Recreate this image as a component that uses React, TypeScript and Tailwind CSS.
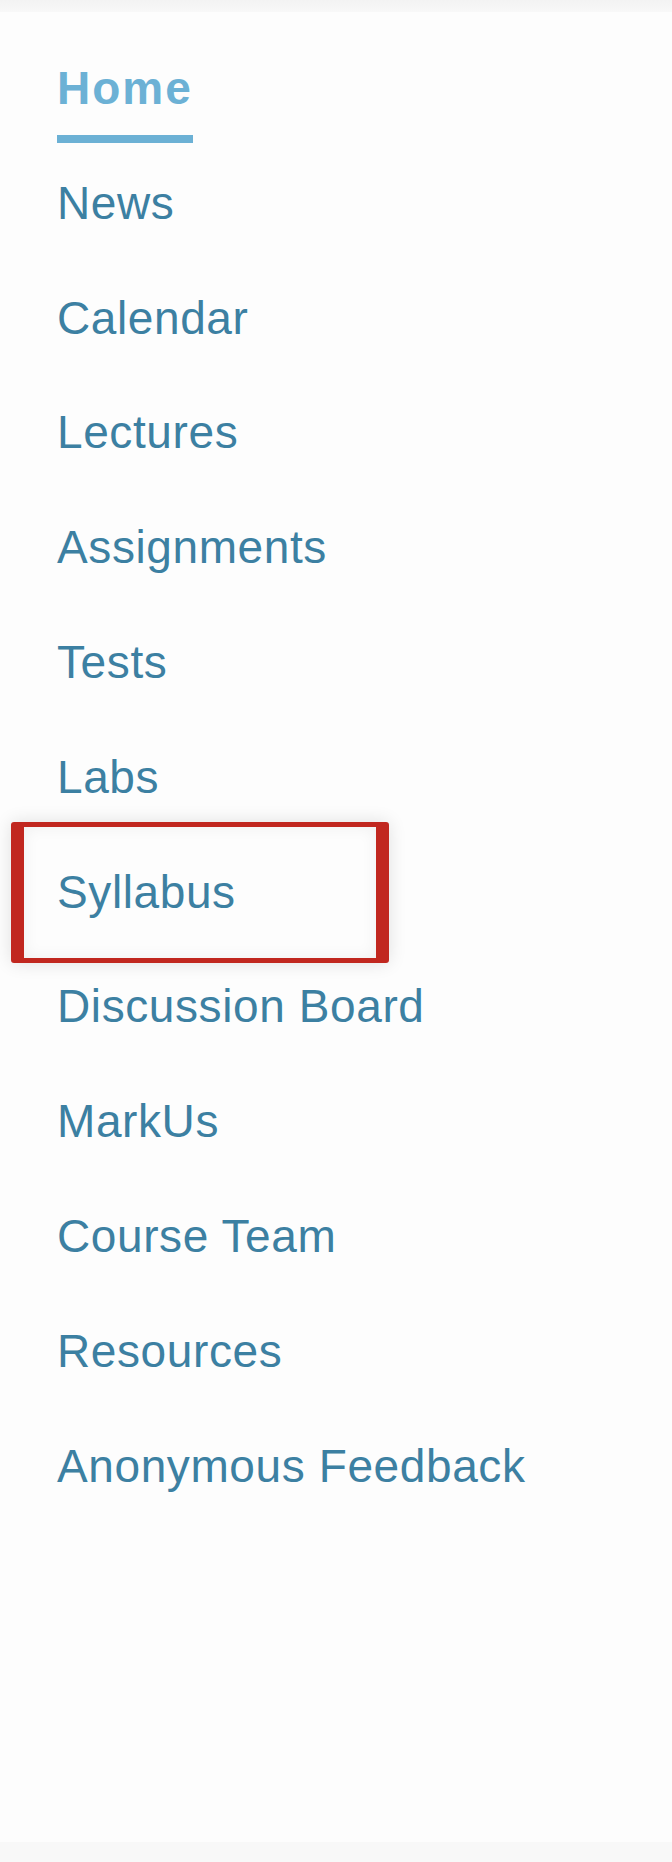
const links = [
  "News",
  "Calendar",
  "Lectures",
  "Assignments",
  "Tests",
  "Labs",
  "Syllabus",
  "Discussion Board",
  "MarkUs",
  "Course Team",
  "Resources",
  "Anonymous Feedback",
];

export default function App() {
  return (
    <div className="flex min-h-[1862px] w-[672px] flex-col bg-[#fdfdfd] font-['Liberation_Sans',Arial,sans-serif]">
      <div className="h-[12px] bg-gradient-to-b from-[#f3f3f3] to-[#f8f8f8]" />
      <nav className="flex-1">
        <ul className="pt-[53px]">
          <li className="h-[114.8px] pl-[57px]">
            <a
              href="#"
              className="inline-block border-b-[8px] border-[#6cb1d5] pb-[24px] text-[46px] leading-[46px] font-bold tracking-[2px] text-[#6cb1d5]"
            >
              Home
            </a>
          </li>

          {links.map((item) => (
            <li key={item} className="relative h-[114.8px] pl-[57px]">
              {item === "Syllabus" && (
                <span className="absolute top-[-47px] left-[11px] h-[141px] w-[378px] rounded-[3px] border-x-[13px] border-y-[5px] border-[#c1271f] shadow-[0_0_18px_rgba(0,0,0,0.12),inset_0_0_16px_rgba(0,0,0,0.06)]" />
              )}
              <a
                href="#"
                className="relative text-[46px] leading-[46px] tracking-[0.6px] text-[#3c80a2]"
              >
                {item}
              </a>
            </li>
          ))}
        </ul>
      </nav>
      <div className="h-[20px] bg-[#f8f8f8]" />
    </div>
  );
}
